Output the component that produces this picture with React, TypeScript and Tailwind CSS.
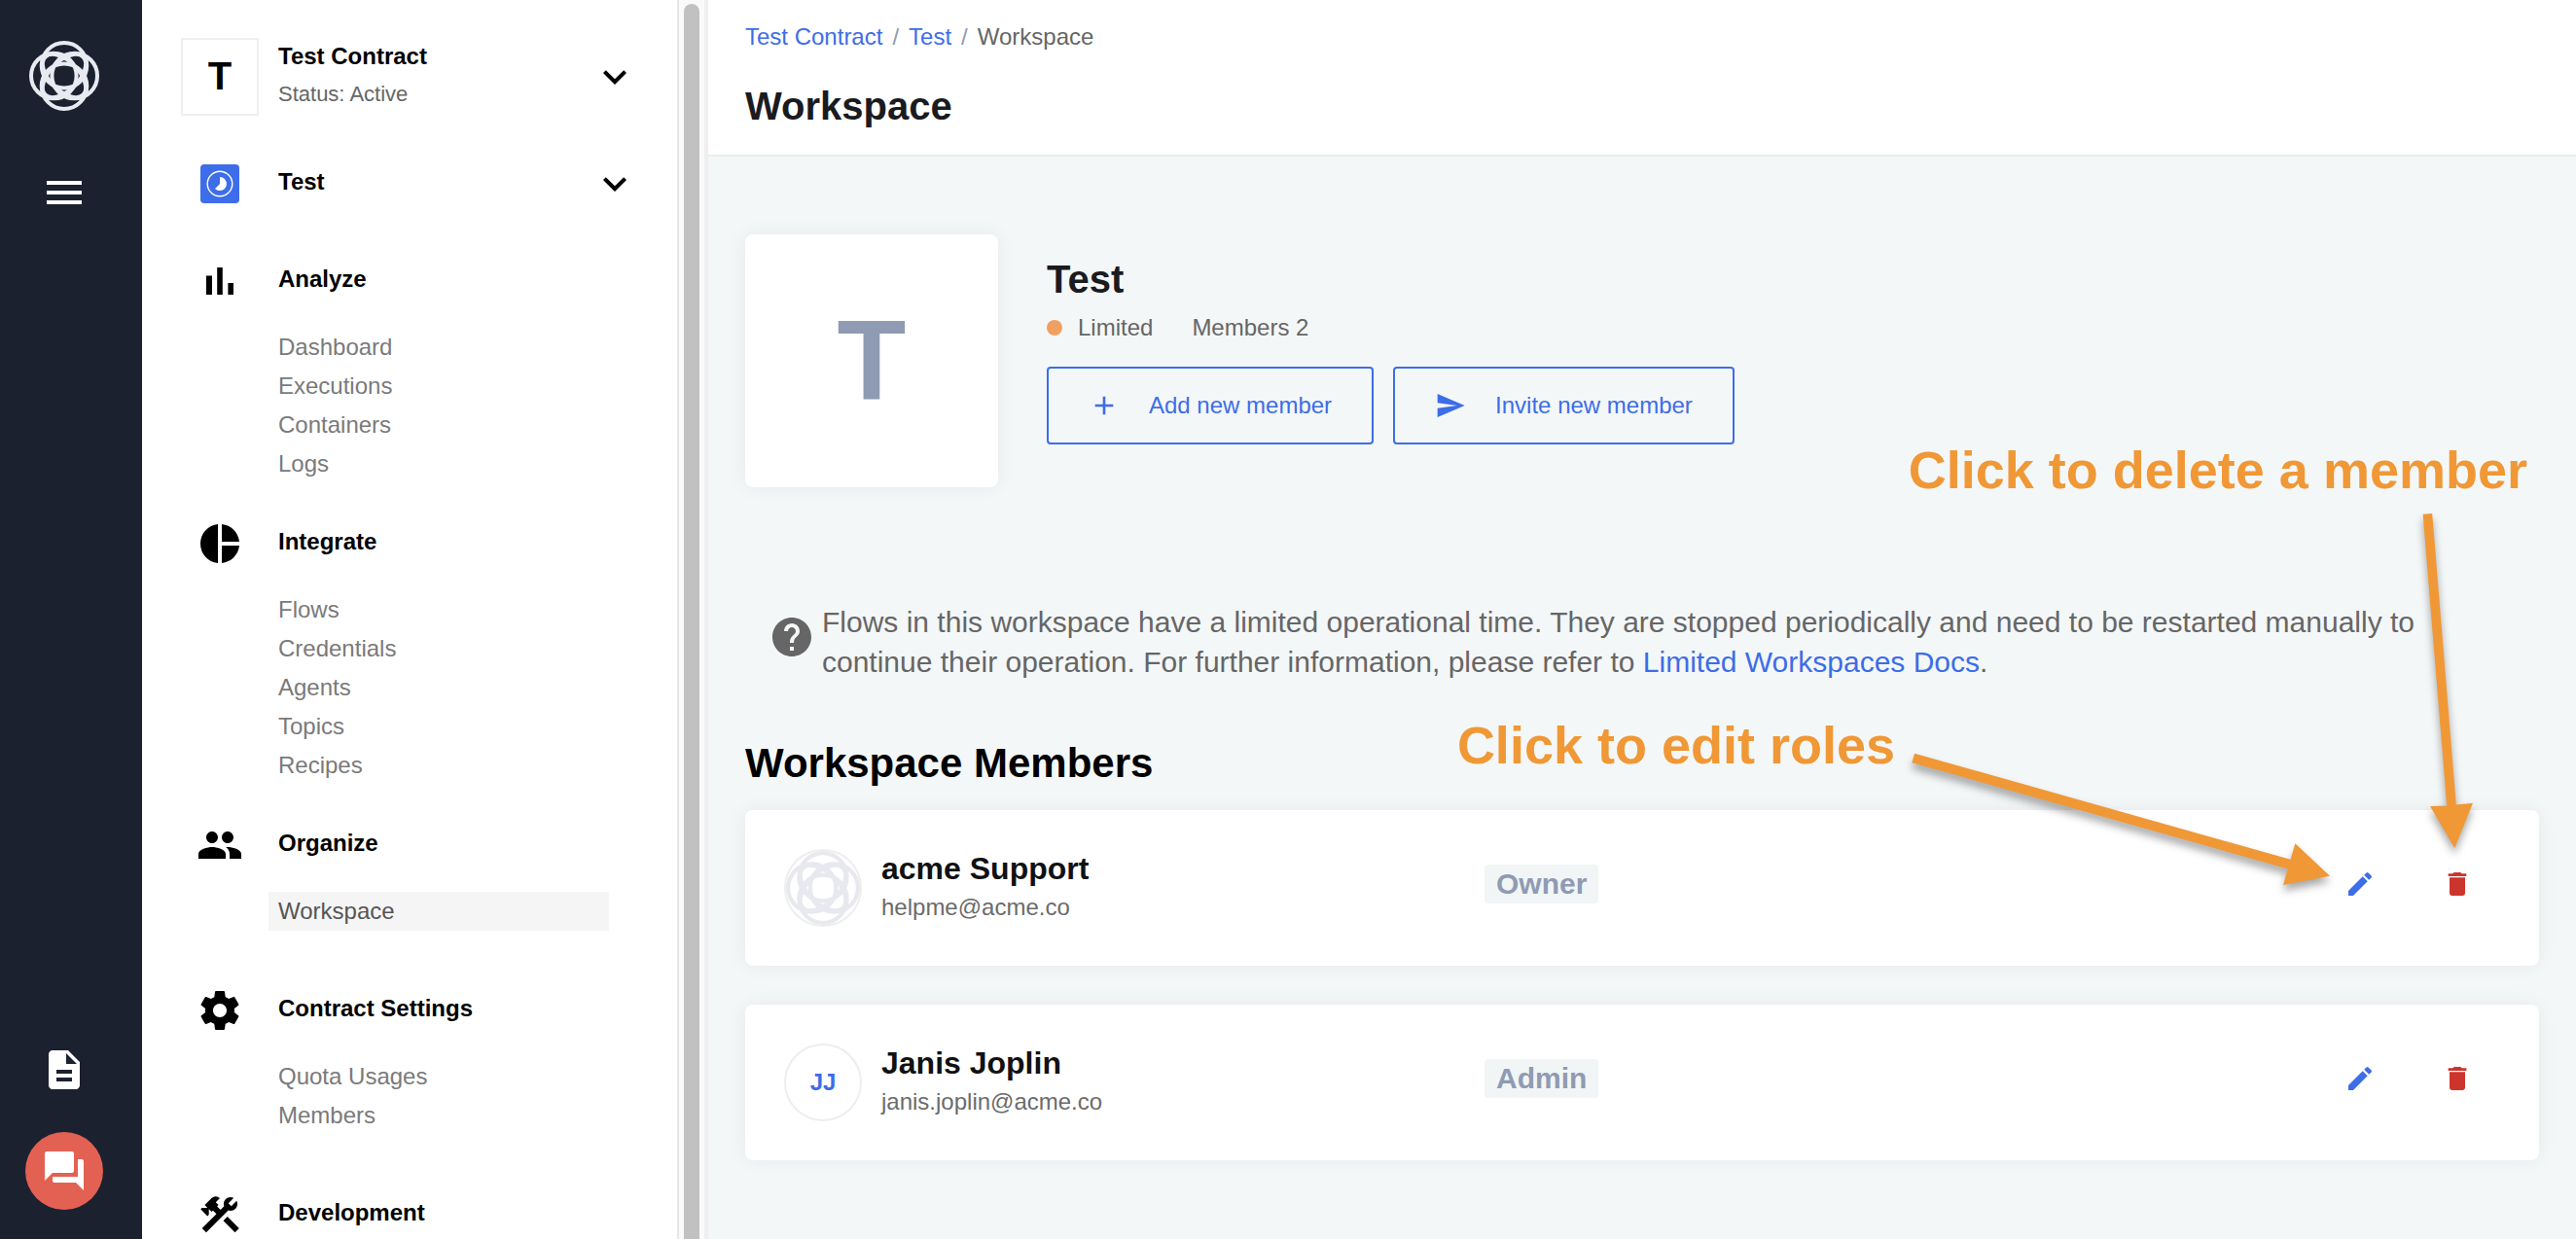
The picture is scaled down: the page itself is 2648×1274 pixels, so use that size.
import type { ReactNode } from "react";
import {
  MdAdd,
  MdConstruction,
  MdDelete,
  MdDescription,
  MdEdit,
  MdExpandMore,
  MdForum,
  MdHelp,
  MdMenu,
  MdPeople,
  MdPieChart,
  MdSend,
} from "react-icons/md";

function Logo({ className }: { className: string }) {
  return (
    <svg viewBox="-36 -36 72 72" className={className} fill="none" stroke="currentColor" strokeWidth="4" aria-hidden="true">
      <circle cx="0" cy="-10.7" r="23.3" />
      <circle cx="0" cy="10.7" r="23.3" />
      <circle cx="-10.7" cy="0" r="23.3" />
      <circle cx="10.7" cy="0" r="23.3" />
      <ellipse rx="27.5" ry="14.8" transform="rotate(45)" />
      <ellipse rx="27.5" ry="14.8" transform="rotate(-45)" />
    </svg>
  );
}

function BarChartIcon() {
  return (
    <svg viewBox="0 0 24 24" className="size-12" fill="currentColor" aria-hidden="true">
      <path d="M5 9.2h3V19H5zM10.6 5h2.8v14h-2.8zm5.6 8H19v6h-2.8z" />
    </svg>
  );
}

function GearIcon() {
  return (
    <svg viewBox="0 0 24 24" className="size-12" fill="currentColor" aria-hidden="true">
      <path d="M19.43 12.98c.04-.32.07-.64.07-.98s-.03-.66-.07-.98l2.11-1.65c.19-.15.24-.42.12-.64l-2-3.46c-.12-.22-.39-.3-.61-.22l-2.49 1c-.52-.4-1.08-.73-1.69-.98l-.38-2.65C14.46 2.18 14.25 2 14 2h-4c-.25 0-.46.18-.49.42l-.38 2.65c-.61.25-1.17.59-1.69.98l-2.49-1c-.23-.09-.49 0-.61.22l-2 3.46c-.13.22-.07.49.12.64l2.11 1.65c-.04.32-.07.65-.07.98s.03.66.07.98l-2.11 1.65c-.19.15-.24.42-.12.64l2 3.46c.12.22.39.3.61.22l2.49-1c.52.4 1.08.73 1.69.98l.38 2.65c.03.24.24.42.49.42h4c.25 0 .46-.18.49-.42l.38-2.65c.61-.25 1.17-.59 1.69-.98l2.49 1c.23.09.49 0 .61-.22l2-3.46c.12-.22.07-.49-.12-.64l-2.11-1.65zM12 15.5c-1.93 0-3.5-1.57-3.5-3.5s1.57-3.5 3.5-3.5 3.5 1.57 3.5 3.5-1.57 3.5-3.5 3.5z" />
    </svg>
  );
}

function WorkspaceBadge() {
  return (
    <span className="flex size-10 items-center justify-center rounded bg-[#3d6de8] text-white">
      <svg viewBox="-20 -20 40 40" className="size-10" aria-hidden="true">
        <circle r="12.8" fill="none" stroke="currentColor" strokeWidth="1.4" />
        <path d="M0-7A7 7 0 1 1-5 5L0 0z" fill="currentColor" />
      </svg>
    </span>
  );
}

type NavSection = { title: string; icon: ReactNode; links: string[]; roomy?: boolean };

const sections: NavSection[] = [
  { title: "Analyze", icon: <BarChartIcon />, links: ["Dashboard", "Executions", "Containers", "Logs"] },
  { title: "Integrate", icon: <MdPieChart className="size-12" />, links: ["Flows", "Credentials", "Agents", "Topics", "Recipes"] },
  { title: "Organize", icon: <MdPeople className="size-12" />, links: ["Workspace"], roomy: true },
  { title: "Contract Settings", icon: <GearIcon />, links: ["Quota Usages", "Members"], roomy: true },
  { title: "Development", icon: <MdConstruction className="size-12" />, links: [] },
];

function Rail() {
  return (
    <div className="flex w-[146px] shrink-0 flex-col bg-[#1c2130] pt-[42px] pb-[30px] pl-[26px] text-white">
      <div className="flex w-20 flex-1 flex-col items-center">
        <a href="#home" aria-label="Home" className="text-[#e8eaf2]">
          <Logo className="size-[72px]" />
        </a>
        <button type="button" aria-label="Menu" className="mt-[60px]">
          <MdMenu className="size-12" />
        </button>
        <a href="#docs" aria-label="Documentation" className="mt-auto">
          <MdDescription className="size-12" />
        </a>
        <button
          type="button"
          aria-label="Chat"
          className="mt-10 flex size-20 items-center justify-center rounded-full bg-[#e36152]"
        >
          <MdForum className="size-12" />
        </button>
      </div>
    </div>
  );
}

function Section({ title, icon, links, roomy }: NavSection) {
  return (
    <section className={roomy ? "mb-[57px]" : "mb-[37px]"}>
      <div className="flex items-center gap-5">
        <span className="flex w-20 justify-center">{icon}</span>
        <h2 className="pb-1 font-bold">{title}</h2>
      </div>
      {links.length > 0 && (
        <ul className="mt-6 mr-[30px] ml-[90px] pb-px">
          {links.map((link) => (
            <li key={link}>
              <a
                href={"#" + link}
                className={
                  link === "Workspace"
                    ? "block bg-[#f5f5f5] px-2.5 leading-10 text-[#555]"
                    : "block px-2.5 leading-10 text-[#7a7a7a]"
                }
              >
                {link}
              </a>
            </li>
          ))}
        </ul>
      )}
    </section>
  );
}

function Sidebar() {
  return (
    <nav className="w-[552px] shrink-0 overflow-hidden border-r-2 border-[#e6e6e6] bg-white pt-[39px] pr-10 pl-10 text-2xl text-black">
      <button type="button" className="flex w-full items-center gap-5 text-left">
        <span className="flex size-20 items-center justify-center border-2 border-[#efefef] text-[40px] font-bold">T</span>
        <span className="flex h-20 flex-1 flex-col">
          <span className="leading-[38px] font-bold">Test Contract</span>
          <span className="text-[22px] leading-10 text-[#666]">Status: Active</span>
        </span>
        <MdExpandMore className="size-12" />
      </button>
      <button type="button" className="mt-[46px] mb-[52px] flex w-full items-center gap-5 text-left">
        <span className="flex w-20 justify-center">
          <WorkspaceBadge />
        </span>
        <span className="flex-1 pb-1 font-bold">Test</span>
        <MdExpandMore className="size-12" />
      </button>
      {sections.map((s) => (
        <Section key={s.title} {...s} />
      ))}
    </nav>
  );
}

function ScrollTrack() {
  return (
    <div aria-hidden="true" className="flex w-[30px] shrink-0 justify-center border-r-4 border-[#efefef] bg-[#fafafa] pt-1">
      <div className="w-4 rounded-t-full bg-[#c1c1c1]" />
    </div>
  );
}

const outlined =
  "flex h-20 items-center gap-[30px] rounded border-2 border-[#3d6de8] px-[41px] text-2xl text-[#3d6de8]";

function Member({ name, email, role, avatar }: { name: string; email: string; role: string; avatar: ReactNode }) {
  return (
    <li className="grid grid-cols-[20fr_29fr] rounded-lg bg-white p-10 shadow-[0_0_20px_rgba(0,0,0,0.06)]">
      <div className="flex gap-5">
        <div className="flex size-20 items-center justify-center rounded-full border-2 border-[#eee] text-2xl font-bold text-[#3d6de8]">
          {avatar}
        </div>
        <div className="leading-10">
          <h3 className="text-[32px] leading-10 font-bold text-[#111]">{name}</h3>
          <p className="text-2xl leading-10 text-[#6b6b6b]">{email}</p>
        </div>
      </div>
      <div className="flex h-[72px] items-center justify-between">
        <span className="rounded-sm bg-[#f2f5f6] px-3 text-3xl leading-10 font-bold text-[#8f9bb3]">{role}</span>
        <div className="flex gap-3">
          <button type="button" aria-label={"Edit " + name} className="flex w-[88px] justify-center text-[#3d6de8]">
            <MdEdit className="size-8" />
          </button>
          <button type="button" aria-label={"Delete " + name} className="flex w-[88px] justify-center text-[#cc352d]">
            <MdDelete className="size-8" />
          </button>
        </div>
      </div>
    </li>
  );
}

/* Callouts that float over the page and point at the row actions. */
function Callouts() {
  return (
    <div className="pointer-events-none absolute inset-0 text-[54px] leading-16 font-bold whitespace-nowrap text-[#f09836]">
      <p className="absolute top-[451px] right-[50px]">Click to delete a member</p>
      <p className="absolute top-[734px] right-[700px]">Click to edit roles</p>
      <svg
        viewBox="0 0 700 960"
        className="absolute top-0 right-0 h-[960px] w-[700px] drop-shadow-[0_6px_4px_rgba(0,0,0,0.35)]"
        fill="currentColor"
        aria-hidden="true"
      >
        <path d="M542.600 528.700L552.200 527.900L576.800 827.600L594 825.700L575.300 872L550 829L567.200 828.400z" />
        <path d="M20.100 774.700L406.600 883.800L411.300 867.300L447 900.700L399 910L403.800 893.400L17.300 784.300z" />
      </svg>
    </div>
  );
}

export default function App() {
  return (
    <div className="flex h-screen overflow-hidden bg-[#f4f7f8] font-['Liberation_Sans',Arial,sans-serif]">
      <Rail />
      <Sidebar />
      <ScrollTrack />
      <main className="relative min-w-0 flex-1">
        <header className="border-b-2 border-[#ebedef] bg-white px-[38px] pt-[22px] pb-[26px]">
          <nav aria-label="Breadcrumb" className="flex gap-2.5 text-2xl leading-8 text-[#666]">
            <a href="#contract" className="text-[#3d6de8]">Test Contract</a>
            <span className="text-[#8f9bb3]">/</span>
            <a href="#test" className="text-[#3d6de8]">Test</a>
            <span className="text-[#8f9bb3]">/</span>
            <span>Workspace</span>
          </nav>
          <h1 className="mt-[31px] text-[40px] leading-12 font-bold text-[#1a1b1f]">Workspace</h1>
        </header>

        <div className="px-[38px] pt-20">
          <section className="flex gap-[50px]">
            <div className="flex size-[260px] items-center justify-center rounded-lg bg-white text-[116px] leading-none font-bold text-[#8f9bb3] shadow-[0_0_20px_rgba(0,0,0,0.06)]">
              T
            </div>
            <div className="pt-[22px]">
              <h2 className="text-[40px] leading-12 font-bold text-[#1a1b1f]">Test</h2>
              <div className="mt-2.5 flex items-center gap-10 text-2xl leading-8 text-[#666]">
                <span className="flex items-center gap-4">
                  <span className="size-4 rounded-full bg-[#f0a062]" />
                  Limited
                </span>
                <span>Members 2</span>
              </div>
              <div className="mt-6 flex gap-5">
                <button type="button" className={outlined}>
                  <MdAdd className="size-8" />
                  Add new member
                </button>
                <button type="button" className={outlined}>
                  <MdSend className="size-8" />
                  Invite new member
                </button>
              </div>
            </div>
          </section>

          <section className="mt-[118px] flex items-start gap-[7px] px-6 text-[#666]">
            <MdHelp className="mt-3 size-12 shrink-0" />
            <p className="text-3xl leading-[41px]">
              Flows in this workspace have a limited operational time. They are stopped periodically and need to be
              restarted manually to continue their operation. For further information, please refer to{" "}
              <a href="#limited" className="text-[#3d6de8]">Limited Workspaces Docs</a>.
            </p>
          </section>

          <section>
            <h2 className="mt-[60px] text-[42px] leading-12 font-bold text-black">Workspace Members</h2>
            <ul className="mt-6 flex flex-col gap-10">
              <Member
                name="acme Support"
                email="helpme@acme.co"
                role="Owner"
                avatar={<Logo className="size-[76px] shrink-0 text-[#e7e9ef]" />}
              />
              <Member name="Janis Joplin" email="janis.joplin@acme.co" role="Admin" avatar="JJ" />
            </ul>
          </section>
        </div>
        <Callouts />
      </main>
    </div>
  );
}
